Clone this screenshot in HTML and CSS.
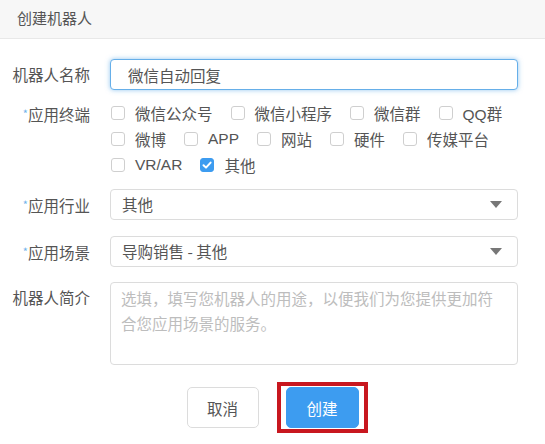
FILE: index.html
```html
<!DOCTYPE html>
<html lang="zh-CN">
  <head>
    <meta charset="UTF-8" />
    <meta name="viewport" content="width=device-width, initial-scale=1.0" />
    <title>创建机器人</title>
    <link rel="stylesheet" href="styles.css">
  </head>
  <body>
    <div class="dialog-head">创建机器人</div>

    <form class="bot-form">
      <div class="row row-tight">
        <label class="label" for="botName">机器人名称</label>
        <input class="field name-field" type="text" id="botName" value="微信自动回复" />
      </div>

      <div class="row row-tight">
        <span class="label label-short"><i class="req">*</i>应用终端</span>
        <div class="checks">
          <label class="check"><span class="box"></span>微信公众号</label>
          <label class="check"><span class="box"></span>微信小程序</label>
          <label class="check"><span class="box"></span>微信群</label>
          <label class="check"><span class="box"></span>QQ群</label>
          <label class="check"><span class="box"></span>微博</label>
          <label class="check"><span class="box"></span>APP</label>
          <label class="check"><span class="box"></span>网站</label>
          <label class="check"><span class="box"></span>硬件</label>
          <label class="check"><span class="box"></span>传媒平台</label>
          <label class="check"><span class="box"></span>VR/AR</label>
          <label class="check">
            <span class="box checked">
              <svg viewBox="0 0 14 14" width="14" height="14">
                <path d="M3.5 7.2 L6 9.6 L10.6 4.6" fill="none" stroke="#fff" stroke-width="2" stroke-linecap="round" stroke-linejoin="round" />
              </svg>
            </span>其他
          </label>
        </div>
      </div>

      <div class="row">
        <span class="label"><i class="req">*</i>应用行业</span>
        <div class="field select">其他<span class="caret"></span></div>
      </div>

      <div class="row row-mid">
        <span class="label"><i class="req">*</i>应用场景</span>
        <div class="field select">导购销售 - 其他<span class="caret"></span></div>
      </div>

      <div class="row">
        <label class="label" for="botDesc">机器人简介</label>
        <textarea class="field desc" id="botDesc" placeholder="选填，填写您机器人的用途，以便我们为您提供更加符&#10;合您应用场景的服务。"></textarea>
      </div>

      <div class="actions">
        <button type="button" class="btn">取消</button>
        <span class="mark">
          <button type="button" class="btn btn-primary">创建</button>
        </span>
      </div>
    </form>
  </body>
</html>
```

FILE: styles.css
```css
body {
  margin: 0;
  font-family: "Noto Sans CJK SC", "Liberation Sans", sans-serif;
  color: #555;
  background: #fff;
}
.dialog-head {
  height: 38px;
  line-height: 36px;
  padding: 0 17px;
  font-size: 15px;
  color: #555;
  background: #f7f7f7;
  border-bottom: 1px solid #e8e8e8;
}
.bot-form {
  padding: 20px 27px 0 10px;
}
.row {
  display: grid;
  grid-template-columns: 80px 1fr;
  column-gap: 20px;
  margin-bottom: 15px;
}
.row-tight {
  margin-bottom: 11px;
}
.row-mid {
  margin-bottom: 14px;
}
.label {
  text-align: right;
  font-size: 15.5px;
  line-height: 31px;
  color: #555;
  white-space: nowrap;
}
.label-short {
  line-height: 25px;
}
.req {
  font-style: normal;
  color: #6fb3ea;
  font-size: 11px;
  vertical-align: 3px;
}
.field {
  box-sizing: border-box;
  width: 100%;
  height: 31px;
  border: 1px solid #dcdcdc;
  border-radius: 4px;
  background: #fff;
  font-family: "Noto Sans CJK SC", "Liberation Sans", sans-serif;
  font-size: 15.5px;
  color: #555;
  padding: 0 11px;
  outline: none;
}
.name-field {
  padding-left: 17px;
  border-color: #66afe9;
  box-shadow: 0 0 5px rgba(102, 175, 233, 0.7);
}
.checks {
  display: flex;
  flex-wrap: wrap;
  margin: -1px -6px 0 1px;
}
.check {
  display: flex;
  align-items: center;
  height: 26px;
  margin-right: 18px;
  font-size: 15.5px;
  color: #555;
  font-family: "Liberation Sans", "Noto Sans CJK SC", sans-serif;
}
.box {
  box-sizing: border-box;
  width: 14px;
  height: 14px;
  margin-right: 10px;
  border: 1px solid #cfcfcf;
  border-radius: 3px;
  background: #fff;
  display: inline-flex;
}
.box.checked {
  border-color: #3d9cf0;
  background: #3d9cf0;
}
.box svg {
  margin: -1px;
}
.select {
  display: flex;
  align-items: center;
  justify-content: space-between;
  line-height: 29px;
}
.caret {
  width: 0;
  height: 0;
  margin-right: 4px;
  border-left: 6px solid transparent;
  border-right: 6px solid transparent;
  border-top: 7px solid #777;
}
.desc {
  height: 83px;
  padding: 3px 10px;
  line-height: 25px;
  resize: none;
}
.desc::placeholder {
  color: #bdbdbd;
}
.actions {
  display: flex;
  justify-content: center;
  align-items: center;
  gap: 18px;
  margin-top: 17px;
  padding-left: 26px;
}
.btn {
  width: 72px;
  height: 41px;
  border: 1px solid #dcdcdc;
  border-radius: 5px;
  background: #fff;
  color: #555;
  font-family: "Noto Sans CJK SC", sans-serif;
  font-size: 15.5px;
  cursor: pointer;
}
.btn-primary {
  width: 73px;
  border-color: #3d9cf0;
  background: #3d9cf0;
  color: #fff;
}
.mark {
  display: inline-flex;
  padding: 1px 5px;
  border: 4px solid #c8171f;
}
```
